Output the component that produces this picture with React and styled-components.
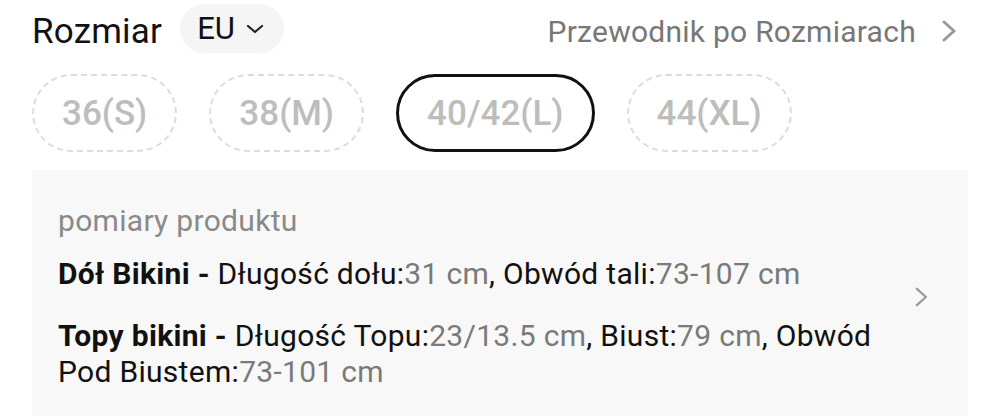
import styled, { createGlobalStyle } from "styled-components";

const GlobalStyle = createGlobalStyle`
  body {
    margin: 0;
    background: #ffffff;
    font-family: Roboto, "Noto Sans", sans-serif;
    color: #111;
  }
`;

const Page = styled.div`
  width: 1000px;
  padding: 0 32px;
  box-sizing: border-box;
`;

const Header = styled.div`
  height: 57px;
  display: flex;
  align-items: center;
  justify-content: space-between;
`;

const HeaderLeft = styled.div`
  display: flex;
  align-items: center;
  gap: 18px;
`;

const Title = styled.h1`
  margin: 6px 0 0;
  font-size: 35px;
  font-weight: 400;
  letter-spacing: 0.2px;
  color: #111;
`;

const UnitPill = styled.button`
  height: 49px;
  padding: 0 20px 0 17px;
  border: none;
  border-radius: 25px;
  background: #f5f5f5;
  display: flex;
  align-items: center;
  gap: 11px;
  font-family: inherit;
  font-size: 31px;
  color: #111;
`;

const GuideLink = styled.a`
  display: flex;
  align-items: center;
  gap: 26px;
  margin: 5px 12px 0 0;
  font-size: 30px;
  letter-spacing: 0.25px;
  color: #777;
  text-decoration: none;
`;

const Chips = styled.div`
  display: flex;
  gap: 32px;
  margin-top: 17px;
`;

const Chip = styled.div`
  height: 78px;
  box-sizing: border-box;
  padding: 0 28px;
  border-radius: 39px;
  border: ${({ $active }) => ($active ? "3px solid #111" : "2px dashed #dcdcdc")};
  display: flex;
  align-items: center;
  justify-content: center;
  font-size: 35px;
  font-weight: 500;
  color: #bdbdbd;
`;

const Panel = styled.div`
  margin-top: 18px;
  background: #f8f8f8;
  padding: 33px 40px 40px 26px;
  display: flex;
  align-items: flex-start;
  gap: 25px;
`;

const PanelBody = styled.div`
  flex: 1;
`;

const PanelTitle = styled.div`
  font-size: 30px;
  line-height: 36px;
  letter-spacing: 0.3px;
  color: #8a8a8a;
  margin-bottom: 17px;
`;

const Line = styled.p`
  margin: 0 0 26px;
  font-size: 30px;
  line-height: 36px;
  letter-spacing: 0.3px;
  color: #111;
`;

const Name = styled.b`
  font-weight: 700;
`;

const Value = styled.span`
  color: #7a7a7a;
`;

const PanelArrow = styled.div`
  margin-top: 84px;
  display: flex;
`;

const ChevronRight = ({ size = 22, color = "#999", width = 3 }) => (
  <svg width={size * 0.64} height={size} viewBox="0 0 14 22" fill="none">
    <path d="M2 2l10 9-10 9" stroke={color} strokeWidth={width} strokeLinecap="round" strokeLinejoin="round" />
  </svg>
);

const ChevronDown = () => (
  <svg width="18" height="10" viewBox="0 0 18 10" fill="none">
    <path d="M2 2l7 6 7-6" stroke="#222" strokeWidth="2.2" strokeLinecap="round" strokeLinejoin="round" />
  </svg>
);

const sizes = [
  { label: "36(S)" },
  { label: "38(M)" },
  { label: "40/42(L)", active: true },
  { label: "44(XL)" },
];

const measurements = [
  {
    name: "Dół Bikini",
    items: [
      ["Długość dołu:", "31 cm"],
      ["Obwód tali:", "73-107 cm"],
    ],
  },
  {
    name: "Topy bikini",
    items: [
      ["Długość Topu:", "23/13.5 cm"],
      ["Biust:", "79 cm"],
      ["Obwód Pod Biustem:", "73-101 cm"],
    ],
  },
];

export default function App() {
  return (
    <>
      <GlobalStyle />
      <Page>
        <Header>
          <HeaderLeft>
            <Title>Rozmiar</Title>
            <UnitPill>
              EU
              <ChevronDown />
            </UnitPill>
          </HeaderLeft>
          <GuideLink>
            Przewodnik po Rozmiarach
            <ChevronRight />
          </GuideLink>
        </Header>
        <Chips>
          {sizes.map((s) => (
            <Chip key={s.label} $active={s.active}>
              {s.label}
            </Chip>
          ))}
        </Chips>
        <Panel>
          <PanelBody>
            <PanelTitle>pomiary produktu</PanelTitle>
            {measurements.map((m) => (
              <Line key={m.name}>
                <Name>{m.name} - </Name>
                {m.items.map(([k, v], i) => (
                  <span key={k}>
                    {k}
                    <Value>{v}</Value>
                    {i < m.items.length - 1 ? ", " : ""}
                  </span>
                ))}
              </Line>
            ))}
          </PanelBody>
          <PanelArrow>
            <ChevronRight size={20} color="#9a9a9a" width={2.5} />
          </PanelArrow>
        </Panel>
      </Page>
    </>
  );
}
